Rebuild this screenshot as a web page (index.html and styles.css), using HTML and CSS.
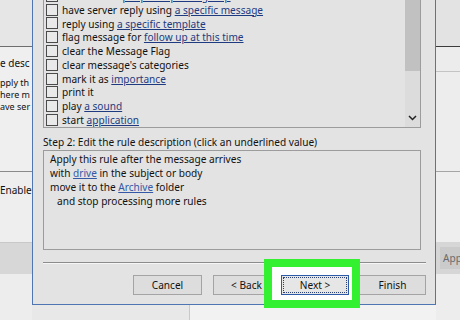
FILE: index.html
```html
<!DOCTYPE html>
<html>
<head>
<meta charset="utf-8">
<link rel="stylesheet" href="styles.css">
</head>
<body>
<div class="screen">
  <div class="bg-left">
    <div class="bl-top"></div>
    <div class="bl-desc">
      <div class="bl-title">e desc</div>
      <div class="bl-line">pply th</div>
      <div class="bl-line">here m</div>
      <div class="bl-line">ave ser</div>
    </div>
    <div class="bl-enable">Enable</div>
    <div class="bl-bar"></div>
    <div class="bl-foot"></div>
  </div>

  <div class="middle">
    <div class="dialog">
      <div class="listbox">
        <div class="rows">
          <div class="row"><span class="cb"></span><span>redirect it to <a class="lk">people or public group</a></span></div>
          <div class="row"><span class="cb"></span><span>have server reply using <a class="lk">a specific message</a></span></div>
          <div class="row"><span class="cb"></span><span>reply using <a class="lk">a specific template</a></span></div>
          <div class="row"><span class="cb"></span><span>flag message for <a class="lk">follow up at this time</a></span></div>
          <div class="row"><span class="cb"></span><span>clear the Message Flag</span></div>
          <div class="row"><span class="cb"></span><span>clear message's categories</span></div>
          <div class="row"><span class="cb"></span><span>mark it as <a class="lk">importance</a></span></div>
          <div class="row"><span class="cb"></span><span>print it</span></div>
          <div class="row"><span class="cb"></span><span>play <a class="lk">a sound</a></span></div>
          <div class="row"><span class="cb"></span><span>start <a class="lk">application</a></span></div>
        </div>
        <div class="scrollbar">
          <div class="thumb"></div>
          <div class="arrow"><svg width="9" height="6" viewBox="0 0 9 6"><path d="M1 1 L4.5 4.5 L8 1" fill="none" stroke="#222" stroke-width="1.5"/></svg></div>
        </div>
      </div>
      <div class="step">Step 2: Edit the rule description (click an underlined value)</div>
      <div class="descbox">
        <div class="dl">Apply this rule after the message arrives</div>
        <div class="dl">with <a class="lk2">drive</a> in the subject or body</div>
        <div class="dl">move it to the <a class="lk2">Archive</a> folder</div>
        <div class="dl indent">and stop processing more rules</div>
      </div>
      <div class="sep"></div>
      <div class="buttons">
        <div class="btn btn-cancel">Cancel</div>
        <div class="btn btn-back">&lt; Back</div>
        <div class="btn btn-next"><span class="focus">Next &gt;</span></div>
        <div class="btn btn-finish">Finish</div>
      </div>
    </div>
    <div class="under">
      <div class="under-a"></div>
      <div class="under-b"></div>
    </div>
  </div>

  <div class="bg-right">
    <div class="br-top"></div>
    <div class="br-b1"></div>
    <div class="br-b2"></div>
    <div class="br-b3"></div>
    <div class="br-bar"><span class="br-app">App</span></div>
    <div class="br-foot"></div>
  </div>

  <div class="highlight"></div>
</div>
</body>
</html>
```

FILE: styles.css
```css
* { box-sizing: border-box; }
html, body { margin: 0; padding: 0; }
body {
  width: 460px;
  height: 320px;
  overflow: hidden;
  background: #ececec;
  font-family: "Noto Sans", "DejaVu Sans", sans-serif;
  font-size: 10.1px;
  color: #111111;
}
.screen {
  position: relative;
  width: 460px;
  height: 320px;
  display: flex;
  overflow: hidden;
}

/* background window, left */
.bg-left {
  width: 32px;
  display: flex;
  flex-direction: column;
  overflow: hidden;
  white-space: nowrap;
  font-size: 10px;
}
.bl-top { height: 47px; background: #e6e6e6; border-bottom: 1px solid #6e6e6e; }
.bl-desc { height: 125px; background: #efefef; border-bottom: 1px solid #8a8a8a; padding-top: 9px; overflow: hidden; }
.bl-title { line-height: 14px; }
.bl-line { line-height: 12px; height: 12px; font-size: 9px; }
.bl-title + .bl-line { margin-top: 7px; }
.bl-enable { height: 70px; background: #eeeeee; padding-top: 11px; line-height: 14px; }
.bl-bar { height: 32px; background: #d7d7d7; border-top: 1px solid #c8c8c8; }
.bl-foot { flex: 1; background: #ededed; }

/* middle column */
.middle {
  width: 404px;
  display: flex;
  flex-direction: column;
}
.dialog {
  height: 305px;
  background: #e3e3e3;
  border-left: 1px solid #4f76b0;
  border-right: 1px solid #4f76b0;
  border-bottom: 1px solid #4f76b0;
  padding: 0 14px 0 10px;
  display: flex;
  flex-direction: column;
}
.listbox {
  margin-top: -12px;
  height: 140px;
  border: 1px solid #9c9c9c;
  display: flex;
}
.rows { flex: 1; overflow: hidden; }
.row {
  height: 13.8px;
  display: flex;
  align-items: center;
  padding-left: 2px;
  white-space: nowrap;
}
.cb {
  width: 12px;
  height: 12px;
  border: 1px solid #4a4a4a;
  background: #e9e9e9;
  margin-right: 4px;
  flex: none;
}
.lk { color: #1e3a80; text-decoration: underline; }
.lk2 { color: #3558a6; text-decoration: underline; }
.scrollbar {
  width: 15px;
  background: #dcdcdc;
  display: flex;
  flex-direction: column;
}
.thumb { height: 82px; background: #c1c1c1; }
.arrow {
  margin-top: auto;
  height: 15px;
  display: flex;
  align-items: center;
  justify-content: center;
  padding-bottom: 3px;
}
.step {
  margin-top: 7px;
  line-height: 14px;
  height: 15px;
  white-space: nowrap;
}
.descbox {
  height: 100px;
  border: 1px solid #9c9c9c;
  padding: 1px 0 0 6px;
}
.dl { line-height: 14px; white-space: nowrap; }
.indent { padding-left: 7px; }
.sep {
  margin-top: 12px;
  margin-right: -5px;
  height: 2px;
  border-top: 1px solid #8c8c8c;
  border-bottom: 1px solid #f6f6f6;
}
.buttons {
  margin-top: 11px;
  margin-right: -5px;
  display: flex;
  justify-content: flex-end;
}
.btn {
  height: 20px;
  border: 1px solid #a4a4a4;
  background: #dddddd;
  display: flex;
  align-items: center;
  justify-content: center;
  line-height: 14px;
}
.btn-cancel { width: 69px; margin-right: 11px; }
.btn-back { width: 67px; margin-right: 1px; }
.btn-next {
  width: 68px;
  margin-right: 10px;
  border-color: #2b5ba8;
  background: #e6e6e6;
  position: relative;
  z-index: 2;
  padding: 1px;
}
.focus {
  width: 100%;
  height: 100%;
  border: 1px dotted #2b3f70;
  display: flex;
  align-items: center;
  justify-content: center;
}
.btn-finish { width: 67px; }

.under { flex: 1; display: flex; }
.under-a { width: 158px; background: #e8e8e8; border-right: 1px solid #c9c9c9; }
.under-b { flex: 1; background: #f2f2f2; }

/* background window, right */
.bg-right {
  width: 24px;
  display: flex;
  flex-direction: column;
  overflow: hidden;
  white-space: nowrap;
}
.br-top { height: 47px; background: #e3e3e3; border-bottom: 1px solid #3c3c3c; }
.br-b1 { height: 25px; background: #ececec; border-bottom: 1px solid #c4c4c4; }
.br-b2 { height: 100px; background: #ededed; border-bottom: 1px solid #a5a5a5; }
.br-b3 { height: 70px; background: #eeeeee; }
.br-bar {
  height: 32px;
  background: #d6d6d6;
  padding: 5px 0 0 4px;
}
.br-app {
  display: block;
  height: 22px;
  background: #cbcbcb;
  color: #6a6a6a;
  line-height: 22px;
  padding-left: 3px;
}
.br-foot { flex: 1; background: #ededed; }

/* green annotation */
.highlight {
  position: absolute;
  left: 264px;
  top: 259px;
  width: 96px;
  height: 49px;
  border: 8px solid #33f030;
  background: #fdfdfd;
  z-index: 1;
}
```
